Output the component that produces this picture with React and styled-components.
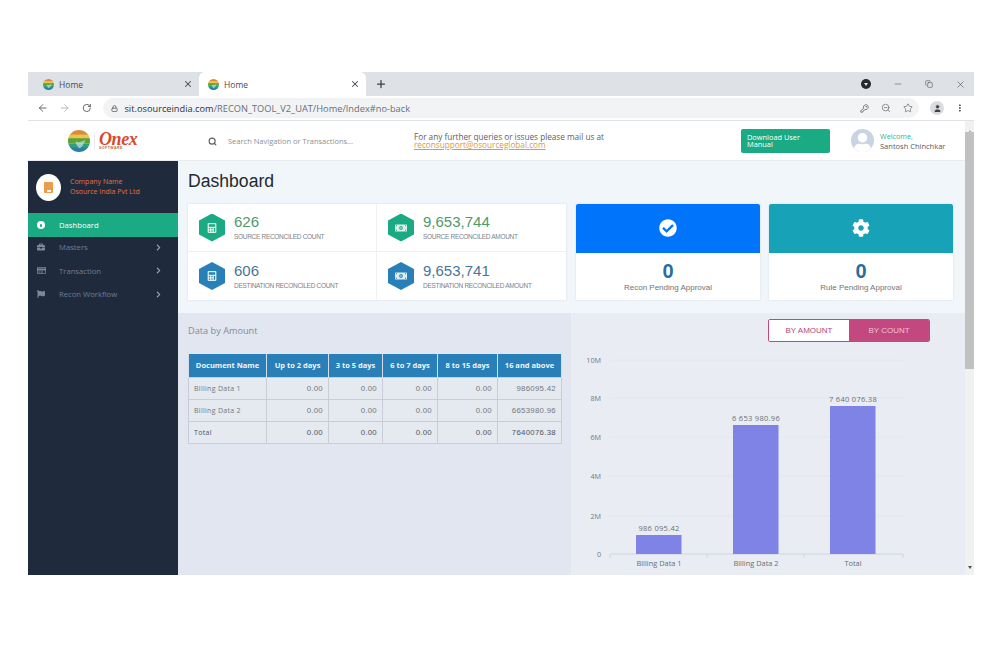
import React from "react";
import styled, { createGlobalStyle } from "styled-components";
import {
  ArrowLeft,
  ArrowRight,
  RotateCw,
  Lock,
  KeyRound,
  ZoomOut,
  Star,
  User,
  MoreVertical,
  X,
  Plus,
  Minus,
  Copy,
  Search,
} from "lucide-react";
import {
  FaCalculator,
  FaMoneyBillAlt,
  FaCheckCircle,
  FaCog,
  FaBriefcase,
  FaRegCreditCard,
  FaFlag,
  FaChevronRight,
  FaUser,
} from "react-icons/fa";

const GlobalStyle = createGlobalStyle`
  html, body {
    margin: 0;
    padding: 0;
    background: #fff;
    overflow: hidden;
  }
  * { box-sizing: border-box; }
`;

const Page = styled.div`
  width: 1000px;
  height: 666px;
  padding: 72px 26px 91px 28px;
`;

const Window = styled.div`
  width: 946px;
  height: 503px;
  display: flex;
  flex-direction: column;
  overflow: hidden;
  font-family: "Open Sans", sans-serif;
`;

/* browser chrome */
const TabStrip = styled.div`
  height: 24px;
  flex: none;
  background: #dee1e6;
  display: flex;
  align-items: center;
  color: #3c4043;
`;

const Tab = styled.div`
  width: ${(p) => (p.$active ? 167 : 171)}px;
  height: 24px;
  display: flex;
  align-items: center;
  padding: 0 4px 0 ${(p) => (p.$active ? 9 : 15)}px;
  font-size: 8.5px;
  color: #4a4d52;
  background: ${(p) => (p.$active ? "#fff" : "transparent")};
  border-radius: ${(p) => (p.$active ? "6px 6px 0 0" : "0")};
  svg.close { margin-left: auto; margin-right: 2px; }
`;

const TabTitle = styled.span`
  margin-left: 5px;
`;

const NewTab = styled.div`
  margin-left: 9px;
  display: flex;
`;

const WinControls = styled.div`
  margin-left: auto;
  display: flex;
  align-items: center;
  gap: 22px;
  padding-right: 8px;
`;

const ShieldDot = styled.div`
  width: 10px;
  height: 10px;
  border-radius: 50%;
  background: #26292e;
  display: flex;
  align-items: center;
  justify-content: center;
  &::after {
    content: "";
    border-left: 2.5px solid transparent;
    border-right: 2.5px solid transparent;
    border-top: 3.5px solid #e6e8ec;
  }
`;

const Toolbar = styled.div`
  height: 25px;
  flex: none;
  background: #fff;
  border-bottom: 1px solid #dfe1e5;
  display: flex;
  align-items: center;
  padding: 0 9px;
  gap: 11px;
  color: #5f6368;
`;

const Omnibox = styled.div`
  width: 816px;
  flex: none;
  height: 20px;
  margin-left: 1px;
  border-radius: 10px;
  background: #f1f3f4;
  display: flex;
  align-items: center;
  padding: 0 6px 0 8px;
  font-size: 9.25px;
  color: #6b6f74;
  gap: 6px;
`;

const Host = styled.span`
  color: #303236;
`;

const OmniIcons = styled.div`
  margin-left: auto;
  display: flex;
  align-items: center;
  gap: 12px;
  color: #5f6368;
`;

const AccountDot = styled.div`
  width: 14px;
  height: 14px;
  flex: none;
  border-radius: 50%;
  background: #dadce0;
  color: #3f4347;
  display: flex;
  align-items: center;
  justify-content: center;
`;

/* app frame */
const Viewport = styled.div`
  flex: 1;
  min-height: 0;
  display: flex;
`;

const AppArea = styled.div`
  width: 937px;
  display: flex;
  flex-direction: column;
`;

const Scrollbar = styled.div`
  width: 9px;
  background: #f1f1f1;
  display: flex;
  flex-direction: column;
  align-items: center;
`;

const ScrollArrow = styled.div`
  height: 9px;
  flex: none;
  width: 0;
  margin-top: ${(p) => (p.$down ? "auto" : "3px")};
  margin-bottom: ${(p) => (p.$down ? "0" : "-1px")};
  border-left: 2.5px solid transparent;
  border-right: 2.5px solid transparent;
  border-bottom: ${(p) => (p.$down ? "0" : "3px solid #b0b0b0")};
  border-top: ${(p) => (p.$down ? "3px solid #505050" : "0")};
`;

const ScrollThumb = styled.div`
  width: 9px;
  height: 237px;
  flex: none;
  background: #c1c1c1;
`;

const Header = styled.header`
  height: 40px;
  flex: none;
  background: #fff;
  border-bottom: 1px solid #e6ebef;
  display: flex;
  align-items: center;
`;

const LogoArea = styled.div`
  width: 180px;
  padding-left: 40px;
  display: flex;
  align-items: center;
`;

const LogoWord = styled.div`
  margin-left: 4px;
  padding-left: 4px;
  border-left: 1px solid #ececec;
  display: flex;
  flex-direction: column;
  line-height: 1;
`;

const LogoName = styled.span`
  font-family: "Liberation Serif", serif;
  font-style: italic;
  font-weight: 700;
  font-size: 18px;
  letter-spacing: -0.4px;
  color: #d8492c;
  line-height: 14px;
`;

const LogoSub = styled.span`
  font-family: "Liberation Sans", sans-serif;
  font-size: 3.5px;
  line-height: 4px;
  font-weight: 700;
  letter-spacing: 0.5px;
  color: #b9643f;
`;

const SearchBox = styled.div`
  width: 206px;
  padding-top: 1px;
  display: flex;
  align-items: center;
  gap: 11px;
  font-size: 7.5px;
  color: #8c9095;
  svg { color: #5b5f63; }
`;

const Notice = styled.div`
  width: 327px;
  font-size: 8.2px;
  line-height: 8px;
  color: #5c6066;
`;

const MailLink = styled.div`
  color: #d79a43;
  text-decoration: underline;
`;

const ManualButton = styled.div`
  width: 89px;
  height: 24px;
  border-radius: 2px;
  background: #1aab84;
  color: #fff;
  font-size: 7.4px;
  line-height: 7.5px;
  padding: 5px 6px;
`;

const Avatar = styled.div`
  width: 23px;
  height: 23px;
  margin-left: 21px;
  border-radius: 50%;
  background: #c9d3e4;
  color: #fff;
  display: flex;
  align-items: flex-end;
  justify-content: center;
  overflow: hidden;
`;

const UserBlock = styled.div`
  margin-left: 6px;
  font-size: 7.5px;
  line-height: 10px;
  color: #585c60;
`;

const Welcome = styled.div`
  color: #2fb493;
  font-size: 7.2px;
`;

const Body = styled.div`
  flex: 1;
  min-height: 0;
  display: flex;
`;

/* sidebar */
const Sidebar = styled.aside`
  width: 150px;
  flex: none;
  background: #1f2b3c;
  display: flex;
  flex-direction: column;
`;

const Company = styled.div`
  height: 52px;
  padding: 13px 0 0 8px;
  display: flex;
  gap: 9px;
`;

const CompanyLogo = styled.div`
  width: 25px;
  height: 27px;
  border-radius: 50%;
  background: #fff;
  display: flex;
  align-items: center;
  justify-content: center;
`;

const CompanyBadge = styled.div`
  width: 9px;
  height: 11px;
  border-radius: 1px;
  background: #ef9a4b;
  display: flex;
  align-items: flex-end;
  justify-content: center;
  padding-bottom: 1px;
  &::after {
    content: "";
    width: 4px;
    height: 2px;
    background: #fff;
  }
`;

const CompanyText = styled.div`
  padding-top: 3px;
  font-size: 7px;
  line-height: 10px;
  color: #e2703c;
`;

const NavItem = styled.div`
  height: ${(p) => p.$h || 23.5}px;
  display: flex;
  align-items: center;
  padding: 0 16px ${(p) => (p.$active ? 1 : 3)}px 9px;
  font-size: 7.7px;
  background: ${(p) => (p.$active ? "#1aab84" : "transparent")};
  color: ${(p) => (p.$active ? "#fff" : "#707d94")};
`;

const NavIcon = styled.span`
  width: 10px;
  margin-right: 12px;
  display: flex;
  color: ${(p) => (p.$active ? "#fff" : "#7a879c")};
`;

const DashDot = styled.div`
  width: 8px;
  height: 8px;
  border-radius: 50%;
  background: #fff;
  display: flex;
  align-items: center;
  justify-content: center;
  &::after {
    content: "";
    width: 2px;
    height: 3px;
    margin-top: 1px;
    border-radius: 1px;
    background: #1aab84;
  }
`;

const NavArrow = styled.span`
  margin-left: auto;
  display: flex;
  color: #93a1b8;
`;

/* content */
const Main = styled.main`
  flex: 1;
  min-width: 0;
  display: flex;
  flex-direction: column;
  background: #f1f6fa;
  font-family: "Liberation Sans", sans-serif;
`;

const Top = styled.div`
  height: 152px;
  flex: none;
  padding: 9px 12px 0 10px;
`;

const Title = styled.h1`
  margin: 0 0 11px;
  height: 23px;
  font-size: 17.6px;
  line-height: 23px;
  font-weight: 400;
  color: #24292e;
`;

const CardRow = styled.div`
  display: flex;
  gap: 10px;
`;

const StatsCard = styled.div`
  width: 378px;
  height: 96px;
  background: #fff;
  display: grid;
  grid-template-columns: 189px 189px;
  grid-template-rows: 48px 48px;
  box-shadow: 0 0 2px rgba(120, 140, 160, 0.25);
`;

const Stat = styled.div`
  display: flex;
  align-items: center;
  padding: 0 0 0 11px;
  gap: 9px;
  border-right: ${(p) => (p.$right ? "0" : "1px solid #eef0f2")};
  border-bottom: ${(p) => (p.$bottom ? "0" : "1px solid #eef0f2")};
`;

const Hexagon = styled.div`
  width: 26px;
  height: 28px;
  flex: none;
  clip-path: polygon(50% 0, 100% 25%, 100% 75%, 50% 100%, 0 75%, 0 25%);
  background: ${(p) => p.$color};
  color: #dcefe9;
  display: flex;
  align-items: center;
  justify-content: center;
`;

const StatText = styled.div`
  display: flex;
  flex-direction: column;
`;

const StatValue = styled.div`
  font-size: 15px;
  line-height: 16px;
  color: ${(p) => p.$color};
`;

const StatLabel = styled.div`
  margin-top: 2px;
  font-size: 6.5px;
  line-height: 9px;
  letter-spacing: -0.3px;
  color: #7d8186;
`;

const Tile = styled.div`
  width: 184px;
  height: 96px;
  margin-right: ${(p) => p.$gap || 0}px;
  background: #fff;
  display: flex;
  flex-direction: column;
  box-shadow: 0 0 2px rgba(120, 140, 160, 0.2);
`;

const TileHead = styled.div`
  height: 49px;
  flex: none;
  background: ${(p) => p.$color};
  border-radius: 2px 2px 0 0;
  color: #fff;
  display: flex;
  align-items: center;
  justify-content: center;
  padding-bottom: 2px;
`;

const TileCount = styled.div`
  margin-top: 8px;
  text-align: center;
  font-size: 20px;
  line-height: 20px;
  font-weight: 700;
  color: #2a6d9e;
`;

const TileLabel = styled.div`
  margin-top: 1px;
  text-align: center;
  font-size: 8px;
  line-height: 11px;
  color: #6f7479;
`;

const Lower = styled.div`
  flex: 1;
  min-height: 0;
  display: flex;
`;

const TablePanel = styled.section`
  width: 393px;
  flex: none;
  background: #e1e6f1;
  padding: 11px 10px 0;
`;

const PanelTitle = styled.div`
  font-family: "Open Sans", sans-serif;
  font-size: 9.2px;
  line-height: 14px;
  color: #858b94;
  margin-bottom: 16px;
`;

const Table = styled.table`
  border-collapse: collapse;
  table-layout: fixed;
  width: 373px;
`;

const Th = styled.th`
  height: 23px;
  padding: 0;
  background: #2980b9;
  color: #eef5fa;
  font-family: "Open Sans", sans-serif;
  font-size: 7.5px;
  font-weight: 700;
  border: 1px solid #d4dde8;
  border-top: 0;
  border-bottom: 0;
  text-align: center;
`;

const Td = styled.td`
  height: 22px;
  padding: 0 5px;
  border: 1px solid #c8ced9;
  background: #e5e9f0;
  font-family: ${(p) => (p.$left ? '"Open Sans", sans-serif' : '"Liberation Sans", sans-serif')};
  font-size: ${(p) => (p.$left ? 7 : 7.8)}px;
  font-weight: 400;
  text-align: ${(p) => (p.$left ? "left" : "right")};
  color: ${(p) => (p.$total ? "#50545a" : "#74787f")};
  letter-spacing: 0.3px;
`;

const ChartPanel = styled.section`
  flex: 1;
  min-width: 0;
  background: #e9edf3;
  padding-top: 6px;
  display: flex;
  flex-direction: column;
`;

const Toggle = styled.div`
  align-self: flex-end;
  margin-right: 35px;
  width: 162px;
  height: 23px;
  flex: none;
  display: flex;
  border: 1px solid #c2487f;
  border-radius: 2px;
  overflow: hidden;
  font-family: "Liberation Sans", sans-serif;
  font-size: 8px;
`;

const ToggleOption = styled.div`
  flex: 1;
  display: flex;
  align-items: center;
  justify-content: center;
  background: ${(p) => (p.$on ? "#c2487f" : "#fff")};
  color: ${(p) => (p.$on ? "#eec3d8" : "#b0487c")};
`;

const ChartSvg = styled.svg`
  display: block;
  margin-top: 3px;
  flex: none;
`;

const tableRows = [
  ["Billing Data 1", "0.00", "0.00", "0.00", "0.00", "986095.42"],
  ["Billing Data 2", "0.00", "0.00", "0.00", "0.00", "6653980.96"],
];

const columns = [78, 62, 54, 55, 60, 64];
const headers = ["Document Name", "Up to 2 days", "3 to 5 days", "6 to 7 days", "8 to 15 days", "16 and above"];

const Globe = ({ size }) => (
  <svg width={size} height={size} viewBox="0 0 24 24">
    <defs>
      <clipPath id={`globe${size}`}>
        <circle cx="12" cy="12" r="12" />
      </clipPath>
    </defs>
    <g clipPath={`url(#globe${size})`}>
      <rect width="24" height="6" fill="#d98a3a" />
      <rect y="5" width="24" height="5" fill="#efc44a" />
      <rect y="9" width="24" height="6" fill="#5aa23c" />
      <rect y="15" width="24" height="5" fill="#2f9f7d" />
      <rect y="19" width="24" height="5" fill="#2a7fa8" />
      <path d="M8 12 Q12 15 19 11 Q16 19 12 20 Q9 17 8 12 Z" fill="#e6eef0" opacity="0.6" />
    </g>
  </svg>
);

const Chart = () => {
  const left = 39;
  const right = 332;
  const base = 209;
  const ticks = [
    ["10M", 15],
    ["8M", 53],
    ["6M", 92],
    ["4M", 131],
    ["2M", 171],
    ["0", 209],
  ];
  const bars = [
    { name: "Billing Data 1", value: "986 095.42", x: 65, top: 190 },
    { name: "Billing Data 2", value: "6 653 980.96", x: 162, top: 80 },
    { name: "Total", value: "7 640 076.38", x: 259, top: 61 },
  ];
  return (
    <ChartSvg width="394" height="229" viewBox="0 0 394 229" fontFamily="Open Sans, sans-serif">
      {ticks.map(([label, y]) => (
        <g key={label}>
          {y !== base && <line x1={left} x2={right} y1={y} y2={y} stroke="#e3e7ee" />}
          <text x="30" y={y + 2.5} fontSize="7.2" fill="#74797f" textAnchor="end">
            {label}
          </text>
        </g>
      ))}
      <line x1={left} x2={right} y1={base} y2={base} stroke="#ccd3e6" />
      {[39, 136, 233, 332].map((x) => (
        <line key={x} x1={x} x2={x} y1={base} y2={base + 4} stroke="#ccd3e6" />
      ))}
      {bars.map((b) => (
        <g key={b.name}>
          <rect x={b.x} y={b.top} width="45.5" height={base - b.top} fill="#7f83e6" />
          <text x={b.x + 23} y={b.top - 4} fontSize="7.5" fill="#6a6f75" textAnchor="middle" letterSpacing="0.3">
            {b.value}
          </text>
          <text x={b.x + 23} y={base + 12} fontSize="7.4" fill="#686d73" textAnchor="middle">
            {b.name}
          </text>
        </g>
      ))}
    </ChartSvg>
  );
};

const StatBlock = ({ icon, color, valueColor, value, label, right, bottom }) => (
  <Stat $right={right} $bottom={bottom}>
    <Hexagon $color={color}>{icon}</Hexagon>
    <StatText>
      <StatValue $color={valueColor}>{value}</StatValue>
      <StatLabel>{label}</StatLabel>
    </StatText>
  </Stat>
);

export default function App() {
  return (
    <Page>
      <GlobalStyle />
      <Window>
        <TabStrip>
          <Tab>
            <Globe size={11} />
            <TabTitle>Home</TabTitle>
            <X className="close" size={10} strokeWidth={2.5} />
          </Tab>
          <Tab $active>
            <Globe size={11} />
            <TabTitle>Home</TabTitle>
            <X className="close" size={10} strokeWidth={2.5} />
          </Tab>
          <NewTab>
            <Plus size={12} strokeWidth={2.5} />
          </NewTab>
          <WinControls>
            <ShieldDot />
            <Minus size={10} strokeWidth={1.2} />
            <Copy size={8} strokeWidth={1.5} />
            <X size={11} strokeWidth={1.2} />
          </WinControls>
        </TabStrip>
        <Toolbar>
          <ArrowLeft size={12} strokeWidth={2} />
          <ArrowRight size={12} strokeWidth={2} color="#b4b7bb" />
          <RotateCw size={10} strokeWidth={2.4} />
          <Omnibox>
            <Lock size={7} strokeWidth={3} />
            <span>
              <Host>sit.osourceindia.com</Host>/RECON_TOOL_V2_UAT/Home/Index#no-back
            </span>
            <OmniIcons>
              <KeyRound size={9} strokeWidth={2.2} />
              <ZoomOut size={10} strokeWidth={1.6} />
              <Star size={10} strokeWidth={1.6} />
            </OmniIcons>
          </Omnibox>
          <AccountDot>
            <User size={9} fill="#3f4347" strokeWidth={1} />
          </AccountDot>
          <MoreVertical size={10} strokeWidth={2.4} color="#3f4347" />
        </Toolbar>
        <Viewport>
          <AppArea>
            <Header>
              <LogoArea>
                <Globe size={22} />
                <LogoWord>
                  <LogoName>Onex</LogoName>
                  <LogoSub>SOFTWARE</LogoSub>
                </LogoWord>
              </LogoArea>
              <SearchBox>
                <Search size={9} strokeWidth={3} />
                <span>Search Navigation or Transactions...</span>
              </SearchBox>
              <Notice>
                <div>For any further queries or issues please mail us at</div>
                <MailLink>reconsupport@osourceglobal.com</MailLink>
              </Notice>
              <ManualButton>Download User Manual</ManualButton>
              <Avatar>
                <FaUser size={19} />
              </Avatar>
              <UserBlock>
                <Welcome>Welcome,</Welcome>
                Santosh Chinchkar
              </UserBlock>
            </Header>
            <Body>
              <Sidebar>
                <Company>
                  <CompanyLogo>
                    <CompanyBadge />
                  </CompanyLogo>
                  <CompanyText>
                    Company Name
                    <br />
                    Osource India Pvt Ltd
                  </CompanyText>
                </Company>
                <NavItem $active $h={24}>
                  <NavIcon $active>
                    <DashDot />
                  </NavIcon>
                  Dashboard
                </NavItem>
                <NavItem>
                  <NavIcon>
                    <FaBriefcase size={8} />
                  </NavIcon>
                  Masters
                  <NavArrow>
                    <FaChevronRight size={7} />
                  </NavArrow>
                </NavItem>
                <NavItem>
                  <NavIcon>
                    <FaRegCreditCard size={9} />
                  </NavIcon>
                  Transaction
                  <NavArrow>
                    <FaChevronRight size={7} />
                  </NavArrow>
                </NavItem>
                <NavItem>
                  <NavIcon>
                    <FaFlag size={8} />
                  </NavIcon>
                  Recon Workflow
                  <NavArrow>
                    <FaChevronRight size={7} />
                  </NavArrow>
                </NavItem>
              </Sidebar>
              <Main>
                <Top>
                  <Title>Dashboard</Title>
                  <CardRow>
                    <StatsCard>
                      <StatBlock icon={<FaCalculator size={10} />} color="#1aab84" valueColor="#4e9a6b" value="626" label="SOURCE RECONCILED COUNT" />
                      <StatBlock icon={<FaMoneyBillAlt size={12} />} color="#1aab84" valueColor="#4e9a6b" value="9,653,744" label="SOURCE RECONCILED AMOUNT" right />
                      <StatBlock icon={<FaCalculator size={10} />} color="#2980b9" valueColor="#4a7598" value="606" label="DESTINATION RECONCILED COUNT" bottom />
                      <StatBlock icon={<FaMoneyBillAlt size={12} />} color="#2980b9" valueColor="#4a7598" value="9,653,741" label="DESTINATION RECONCILED AMOUNT" right bottom />
                    </StatsCard>
                    <Tile $gap={-1}>
                      <TileHead $color="#0075fb">
                        <FaCheckCircle size={18} />
                      </TileHead>
                      <TileCount>0</TileCount>
                      <TileLabel>Recon Pending Approval</TileLabel>
                    </Tile>
                    <Tile>
                      <TileHead $color="#17a2b8">
                        <FaCog size={18} />
                      </TileHead>
                      <TileCount>0</TileCount>
                      <TileLabel>Rule Pending Approval</TileLabel>
                    </Tile>
                  </CardRow>
                </Top>
                <Lower>
                  <TablePanel>
                    <PanelTitle>Data by Amount</PanelTitle>
                    <Table>
                      <colgroup>
                        {columns.map((w, i) => (
                          <col key={i} width={w} />
                        ))}
                      </colgroup>
                      <thead>
                        <tr>
                          {headers.map((h) => (
                            <Th key={h}>{h}</Th>
                          ))}
                        </tr>
                      </thead>
                      <tbody>
                        {tableRows.map((row) => (
                          <tr key={row[0]}>
                            {row.map((c, i) => (
                              <Td key={i} $left={i === 0}>
                                {c}
                              </Td>
                            ))}
                          </tr>
                        ))}
                        <tr>
                          {["Total", "0.00", "0.00", "0.00", "0.00", "7640076.38"].map((c, i) => (
                            <Td key={i} $left={i === 0} $total>
                              {c}
                            </Td>
                          ))}
                        </tr>
                      </tbody>
                    </Table>
                  </TablePanel>
                  <ChartPanel>
                    <Toggle>
                      <ToggleOption>BY AMOUNT</ToggleOption>
                      <ToggleOption $on>BY COUNT</ToggleOption>
                    </Toggle>
                    <Chart />
                  </ChartPanel>
                </Lower>
              </Main>
            </Body>
          </AppArea>
          <Scrollbar>
            <ScrollArrow />
            <ScrollThumb />
            <ScrollArrow $down />
          </Scrollbar>
        </Viewport>
      </Window>
    </Page>
  );
}
